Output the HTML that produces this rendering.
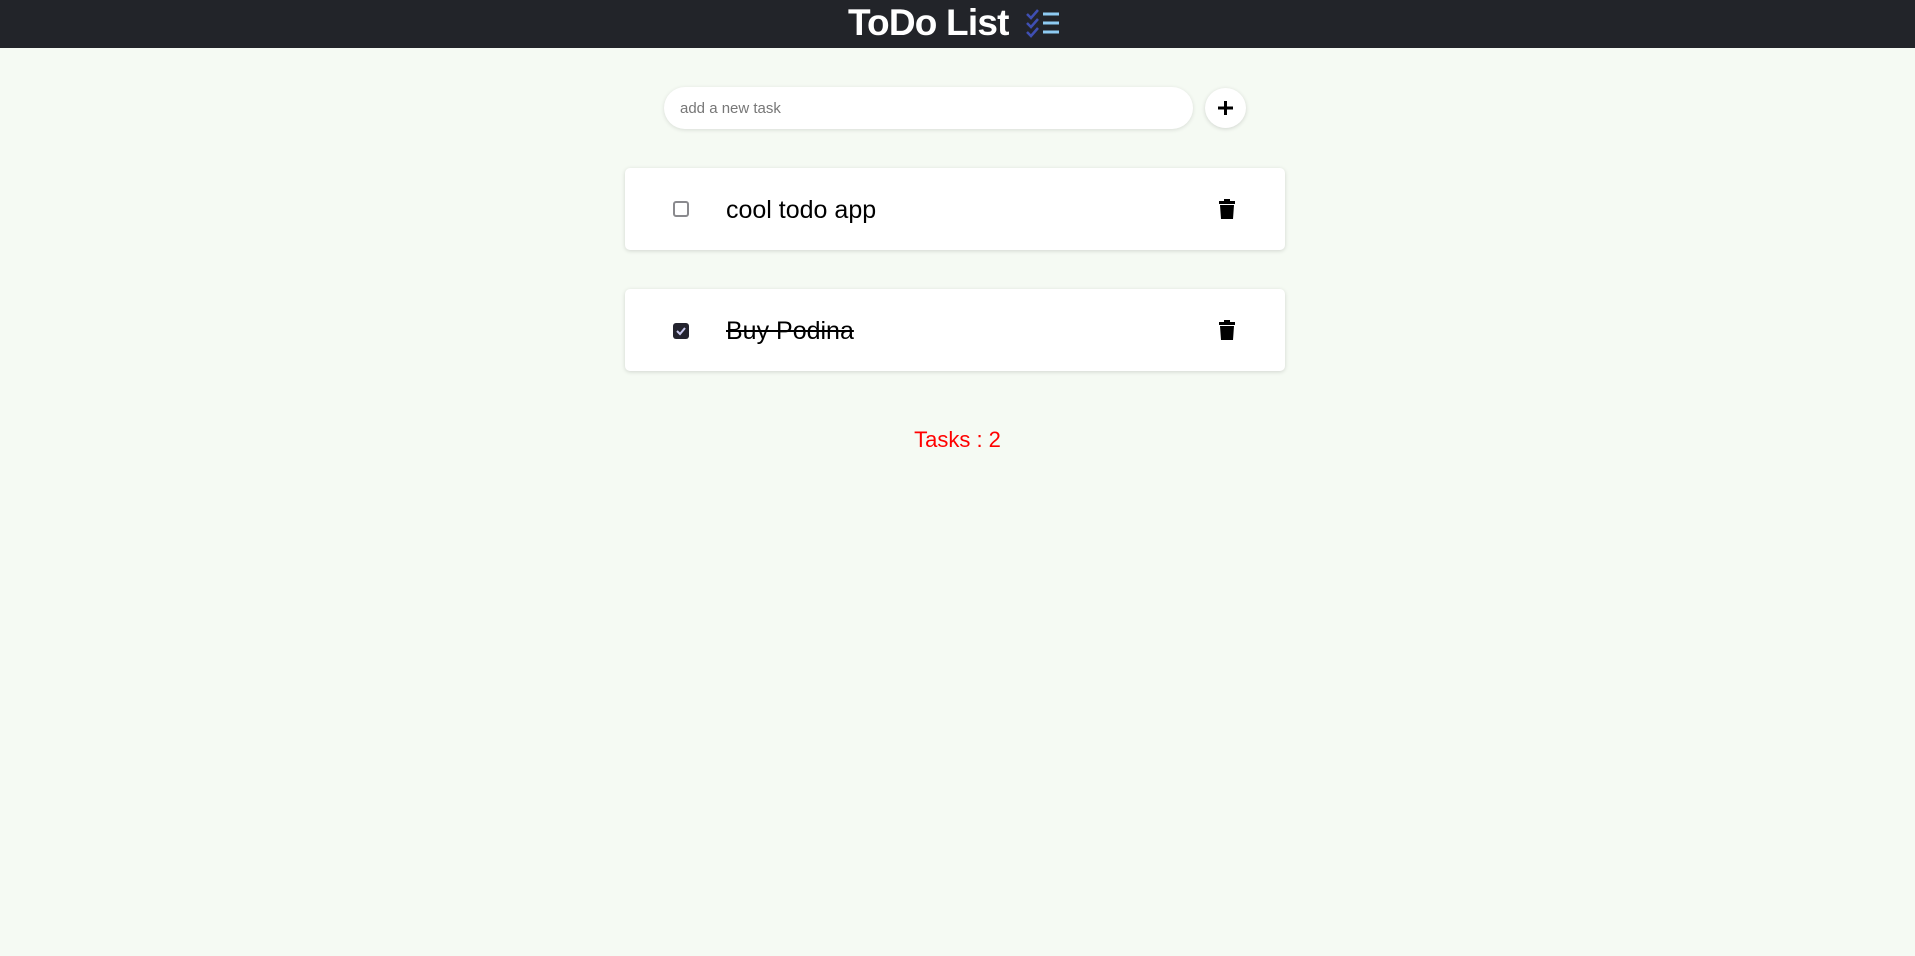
<!DOCTYPE html>
<html><head><meta charset="utf-8"><style>
*{box-sizing:border-box;margin:0;padding:0}
body{width:1915px;height:956px;background:#f5faf3;font-family:"Liberation Sans",sans-serif;position:relative;overflow:hidden}
.hdr{position:absolute;left:0;top:0;width:1915px;height:48px;background:#222429}
.title{position:absolute;left:848px;top:2px;font-size:37px;font-weight:bold;color:#fff;letter-spacing:-0.8px}
.inp{position:absolute;left:664px;top:87px;width:529px;height:42px;background:#fff;border-radius:21px;box-shadow:0 1px 4px rgba(0,0,0,.12);font-size:15px;color:#777;padding:13px 16px 0}
.btn{position:absolute;left:1205px;top:88px;width:41px;height:40px;border-radius:50%;background:#fff;box-shadow:0 1px 4px rgba(0,0,0,.15)}
.card{position:absolute;left:625px;width:660px;height:82px;background:#fff;border-radius:5px;box-shadow:0 1px 4px rgba(0,0,0,.15)}
.cb{position:absolute;left:48px;top:33px;width:16px;height:16px;border-radius:3px}
.txt{position:absolute;left:101px;top:28px;font-size:25px;color:#000}
.trash{position:absolute;left:594px;top:31px}
.tasks{position:absolute;left:0;width:1915px;top:427px;text-align:center;color:#f00;font-size:22px}
</style></head><body>
<div class="hdr">
<div class="title">ToDo List</div>
<svg style="position:absolute;left:1025px;top:9px" width="38" height="30" viewBox="0 0 38 30">
<g fill="none" stroke="#3f4fb3" stroke-width="2.5"><path d="M2 5l4 4 7-8M2 14l4 4 7-8M2 23l4 4 7-8"/></g>
<g stroke="#8ecbf2" stroke-width="3"><path d="M18 5h16M18 14h16M18 23h16"/></g></svg>
</div>
<div class="inp">add a new task</div>
<div class="btn"><svg style="position:absolute;left:13px;top:13px" width="15" height="14"><path d="M7.5 0v14M0 7h15" stroke="#000" stroke-width="3"/></svg></div>
<div class="card" style="top:168px">
<div class="cb" style="border:2px solid #8a8a8e;top:33px"></div>
<div class="txt">cool todo app</div>
<svg class="trash" width="16" height="20" viewBox="0 0 16 20"><path d="M5 0h6v2h5v3H0V2h5zM1 6h14l-1 14H2z" fill="#000"/></svg>
</div>
<div class="card" style="top:289px">
<div class="cb" style="background:#23232e;top:34px"><svg width="16" height="16"><path d="M4 8l3 3 5-6" fill="none" stroke="#c8c8ee" stroke-width="2"/></svg></div>
<div class="txt" style="text-decoration:line-through">Buy Podina</div>
<svg class="trash" width="16" height="20" viewBox="0 0 16 20"><path d="M5 0h6v2h5v3H0V2h5zM1 6h14l-1 14H2z" fill="#000"/></svg>
</div>
<div class="tasks">Tasks : 2</div>
</body></html>
